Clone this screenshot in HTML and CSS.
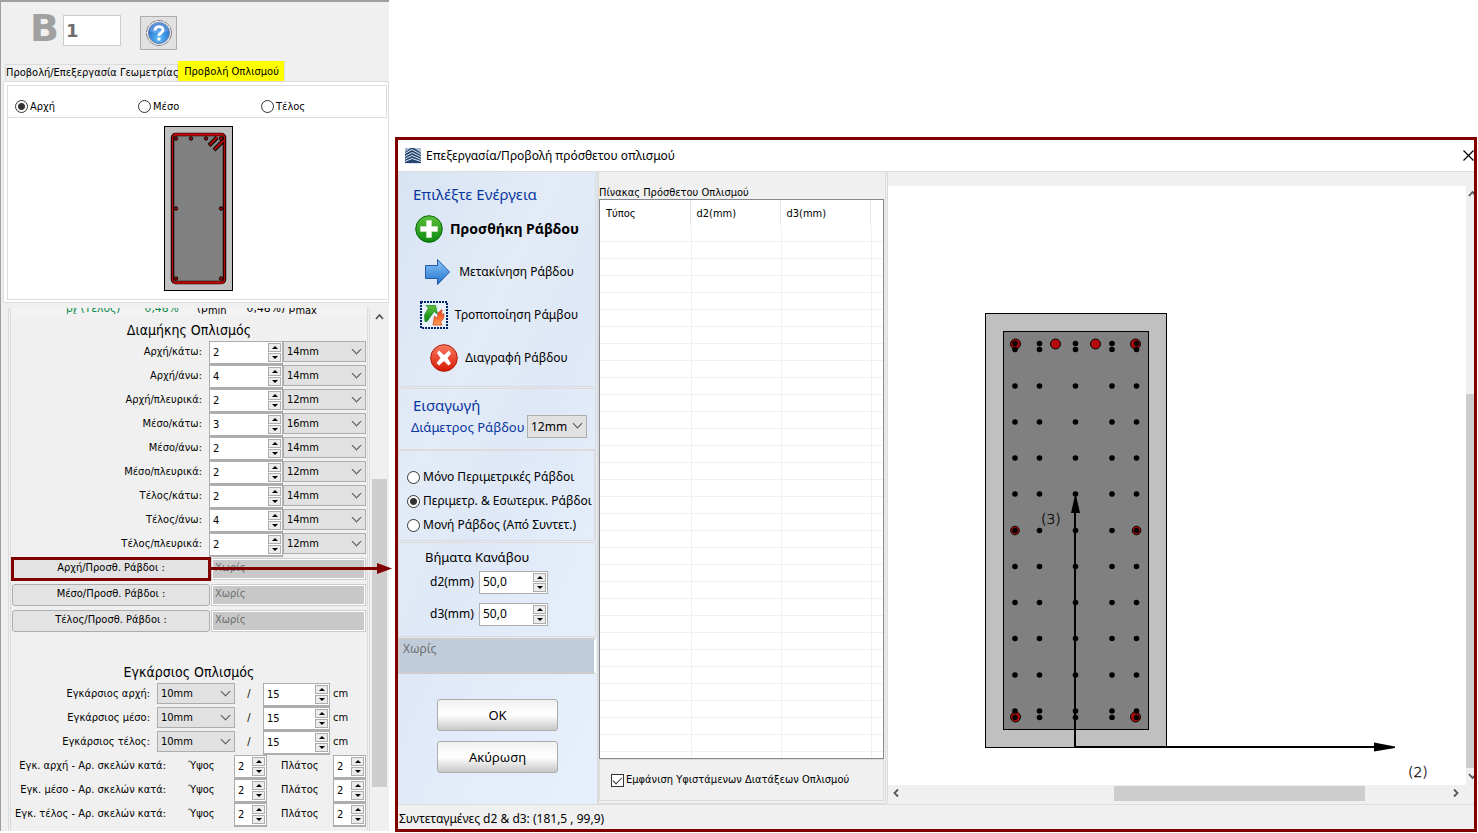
FILE: index.html
```html
<!DOCTYPE html>
<html lang="el">
<head>
<meta charset="utf-8">
<title>Επεξεργασία/Προβολή πρόσθετου οπλισμού</title>
<link rel="stylesheet" href="styles.css">
</head>
<body>
<svg width="0" height="0" class="defs" aria-hidden="true">
  <defs>
    <radialGradient id="blue" cx="50%" cy="75%" r="70%"><stop offset="0" stop-color="#5cc0fa"/><stop offset="1" stop-color="#1b62c8"/></radialGradient>
    <linearGradient id="green" x1="0" y1="0" x2="0" y2="1"><stop offset="0" stop-color="#5cc03c"/><stop offset="1" stop-color="#0c8a10"/></linearGradient>
    <linearGradient id="red" x1="0" y1="0" x2="0" y2="1"><stop offset="0" stop-color="#fa7a60"/><stop offset="1" stop-color="#d81804"/></linearGradient>
    <linearGradient id="arrow" x1="0" y1="0" x2="0" y2="1"><stop offset="0" stop-color="#8cc8fa"/><stop offset="1" stop-color="#2070cc"/></linearGradient>
    <linearGradient id="orange" x1="0" y1="0" x2="0" y2="1"><stop offset="0" stop-color="#f03c10"/><stop offset="1" stop-color="#ff9a50"/></linearGradient>
  </defs>
</svg>
<div class="page">
  <aside class="props">
    <header class="member">
      <label class="member-letter" for="member">B</label>
      <input class="member-no" id="member" value="1">
      <button class="help" aria-label="Βοήθεια">
        <svg width="28" height="28" viewBox="0 0 28 28"><circle cx="14" cy="14" r="12.500" fill="#e8e8ec" stroke="#85858c" stroke-dasharray="7 1"/><circle cx="14" cy="14" r="10.500" fill="url(#blue)" stroke="#6683a8"/><path d="M5 12a9 9 0 0 1 18 0c-5 3-13 3-18 0z" fill="#8ab8f0" opacity=".5"/><path d="M10 11.500c0-5 8-5 8-.5 0 3-4 2.500-4 6" fill="none" stroke="#fff" stroke-width="2.800"/><rect x="12.500" y="18.500" width="3" height="3" fill="#fff"/></svg>
      </button>
    </header>
    <nav class="tabs">
      <button class="tab">Προβολή/Επεξεργασία Γεωμετρίας</button>
      <button class="tab active">Προβολή Οπλισμού</button>
    </nav>
    <section class="tab-page">
      <div class="positions">
        <label><input type="radio" name="pos" checked>Αρχή</label>
        <label><input type="radio" name="pos">Μέσο</label>
        <label><input type="radio" name="pos">Τέλος</label>
      </div>
      <div class="preview">
        <svg width="69" height="165" viewBox="0 0 69 165">
          <rect x=".5" y=".5" width="68" height="164" fill="#c0c0c0" stroke="#000"/>
          <rect x="8.500" y="8.500" width="52" height="148" rx="3" fill="#808080" stroke="#000" stroke-width="3.500"/>
          <rect x="8.500" y="8.500" width="52" height="148" rx="3" fill="none" stroke="#b40a0a" stroke-width="1.600"/>
          <path d="M10 8.500h49M10 156.500h49" stroke="#b40a0a" stroke-width="2.500"/>
          <g stroke="#000" stroke-width="4"><path d="M45 19.500l8-8M50 24l9-9"/></g>
          <g stroke="#b40a0a" stroke-width="2"><path d="M45.500 19l8-8M50.500 23.500l9-9"/></g>
          <g fill="#b40a0a" stroke="#000"><circle cx="12" cy="12.500" r="1.700"/><circle cx="27" cy="12.500" r="1.700"/><circle cx="42" cy="12.500" r="1.700"/><circle cx="57" cy="12.500" r="1.700"/><circle cx="12" cy="82.500" r="1.700"/><circle cx="57" cy="82.500" r="1.700"/><circle cx="12" cy="152.500" r="1.700"/><circle cx="57" cy="152.500" r="1.700"/></g>
        </svg>
      </div>
    </section>
    <div class="scroller">
      <div class="sheet">
        <div class="ratio"><span class="ratio-a">ρ<sub>ℓ</sub> (Τέλος)</span><span class="ratio-a">0,48%</span><span class="ratio-b">(ρ<sub>min</sub></span><span>0,48%) ρ<sub>max</sub></span></div>
        <h2>Διαμήκης Οπλισμός</h2>
        <div class="bars">
          <label for="b1">Αρχή/κάτω:</label><span class="spin"><input id="b1" value="2"><span class="steps"><button aria-label="+"></button><button aria-label="-"></button></span></span><span class="pick"><select aria-label="Διάμετρος"><option>14mm</option></select></span>
          <label for="b2">Αρχή/άνω:</label><span class="spin"><input id="b2" value="4"><span class="steps"><button aria-label="+"></button><button aria-label="-"></button></span></span><span class="pick"><select aria-label="Διάμετρος"><option>14mm</option></select></span>
          <label for="b3">Αρχή/πλευρικά:</label><span class="spin"><input id="b3" value="2"><span class="steps"><button aria-label="+"></button><button aria-label="-"></button></span></span><span class="pick"><select aria-label="Διάμετρος"><option>12mm</option></select></span>
          <label for="b4">Μέσο/κάτω:</label><span class="spin"><input id="b4" value="3"><span class="steps"><button aria-label="+"></button><button aria-label="-"></button></span></span><span class="pick"><select aria-label="Διάμετρος"><option>16mm</option></select></span>
          <label for="b5">Μέσο/άνω:</label><span class="spin"><input id="b5" value="2"><span class="steps"><button aria-label="+"></button><button aria-label="-"></button></span></span><span class="pick"><select aria-label="Διάμετρος"><option>14mm</option></select></span>
          <label for="b6">Μέσο/πλευρικά:</label><span class="spin"><input id="b6" value="2"><span class="steps"><button aria-label="+"></button><button aria-label="-"></button></span></span><span class="pick"><select aria-label="Διάμετρος"><option>12mm</option></select></span>
          <label for="b7">Τέλος/κάτω:</label><span class="spin"><input id="b7" value="2"><span class="steps"><button aria-label="+"></button><button aria-label="-"></button></span></span><span class="pick"><select aria-label="Διάμετρος"><option>14mm</option></select></span>
          <label for="b8">Τέλος/άνω:</label><span class="spin"><input id="b8" value="4"><span class="steps"><button aria-label="+"></button><button aria-label="-"></button></span></span><span class="pick"><select aria-label="Διάμετρος"><option>14mm</option></select></span>
          <label for="b9">Τέλος/πλευρικά:</label><span class="spin"><input id="b9" value="2"><span class="steps"><button aria-label="+"></button><button aria-label="-"></button></span></span><span class="pick"><select aria-label="Διάμετρος"><option>12mm</option></select></span>
        </div>
        <div class="extras">
          <div class="extra marked"><button>Αρχή/Προσθ. Ράβδοι :</button><input value="Χωρίς" aria-label="Αρχή" disabled>
            <svg class="pointer" width="182" height="12" viewBox="0 0 182 12"><path d="M0 5.500h168" stroke="#800000" stroke-width="3"/><path d="M167 0l15 5.500-15 5.500z" fill="#800000"/></svg>
          </div>
          <div class="extra"><button>Μέσο/Προσθ. Ράβδοι :</button><input value="Χωρίς" aria-label="Μέσο" disabled></div>
          <div class="extra"><button>Τέλος/Προσθ. Ράβδοι :</button><input value="Χωρίς" aria-label="Τέλος" disabled></div>
        </div>
        <h2>Εγκάρσιος Οπλισμός</h2>
        <div class="ties">
          <label for="t1">Εγκάρσιος αρχή:</label><span class="pick"><select id="t1"><option>10mm</option></select></span><span class="slash">/</span><span class="spin"><input value="15" aria-label="cm"><span class="steps"><button aria-label="+"></button><button aria-label="-"></button></span></span><span class="unit">cm</span>
          <label for="t2">Εγκάρσιος μέσο:</label><span class="pick"><select id="t2"><option>10mm</option></select></span><span class="slash">/</span><span class="spin"><input value="15" aria-label="cm"><span class="steps"><button aria-label="+"></button><button aria-label="-"></button></span></span><span class="unit">cm</span>
          <label for="t3">Εγκάρσιος τέλος:</label><span class="pick"><select id="t3"><option>10mm</option></select></span><span class="slash">/</span><span class="spin"><input value="15" aria-label="cm"><span class="steps"><button aria-label="+"></button><button aria-label="-"></button></span></span><span class="unit">cm</span>
        </div>
        <div class="legs">
          <span class="lead">Εγκ. αρχή - Αρ. σκελών κατά:</span><label for="h1">Ύψος</label><span class="spin"><input id="h1" value="2"><span class="steps"><button aria-label="+"></button><button aria-label="-"></button></span></span><label for="w1">Πλάτος</label><span class="spin"><input id="w1" value="2"><span class="steps"><button aria-label="+"></button><button aria-label="-"></button></span></span>
          <span class="lead">Εγκ. μέσο - Αρ. σκελών κατά:</span><label for="h2">Ύψος</label><span class="spin"><input id="h2" value="2"><span class="steps"><button aria-label="+"></button><button aria-label="-"></button></span></span><label for="w2">Πλάτος</label><span class="spin"><input id="w2" value="2"><span class="steps"><button aria-label="+"></button><button aria-label="-"></button></span></span>
          <span class="lead">Εγκ. τέλος - Αρ. σκελών κατά:</span><label for="h3">Ύψος</label><span class="spin"><input id="h3" value="2"><span class="steps"><button aria-label="+"></button><button aria-label="-"></button></span></span><label for="w3">Πλάτος</label><span class="spin"><input id="w3" value="2"><span class="steps"><button aria-label="+"></button><button aria-label="-"></button></span></span>
        </div>
      </div>
      <div class="vbar">
        <svg width="15" height="18" viewBox="0 0 15 18"><path d="M4 11l3.500-4 3.500 4" fill="none" stroke="#555" stroke-width="1.800"/></svg>
        <div class="vthumb"></div>
      </div>
    </div>
  </aside>

  <main class="dialog">
    <header class="title">
      <svg width="16" height="16" viewBox="0 0 16 16"><rect width="16" height="16" fill="#24466e"/><path d="M0 0h6L0 4zM9 0h7v5z" fill="#a8bcd0"/><path d="M0 5.500l7-4 9 5M0 8.500l7-4 9 4.500M0 11l7-3.500 9 4M0 13.500l7-3 9 3M0 15.500h16" fill="none" stroke="#dce8f4"/></svg>
      <h1>Επεξεργασία/Προβολή πρόσθετου οπλισμού</h1>
      <button class="close" aria-label="Κλείσιμο"><svg width="11" height="11" viewBox="0 0 11 11"><path d="M.5.500l10 10M10.500.500l-10 10" stroke="#000" stroke-width="1.200"/></svg></button>
    </header>
    <div class="work">
      <div class="side">
        <section class="box actions">
          <h3>Επιλέξτε Ενέργεια</h3>
          <button class="act current"><svg width="28" height="28" viewBox="0 0 28 28"><circle cx="14" cy="14" r="13.300" fill="url(#green)" stroke="#0a6a0a"/><path d="M11.500 5.500h5v6h6v5h-6v6h-5v-6h-6v-5h6z" fill="#fff" stroke="#d8e8d0" stroke-width=".6"/></svg>Προσθήκη Ράβδου</button>
          <button class="act"><svg width="28" height="28" viewBox="0 0 28 28"><path d="M1.500 7.500h12v-6l12 12.500-12 12.500v-6h-12z" fill="url(#arrow)" stroke="#2458a8"/></svg>Μετακίνηση Ράβδου</button>
          <button class="act"><svg width="28" height="28" viewBox="0 0 28 28"><rect x="1" y="1" width="26" height="26" fill="#e8f0fa" stroke="#00246e" stroke-width="2" stroke-dasharray="2 1"/><path d="M5 20.500L4.500 14 8.500 7 6 4.500h9.500l2 8.500-3.500-2.500-7 10z" fill="url(#green)" stroke="#128020" stroke-width=".7"/><path d="M22 8.500l-4 3.500-.5 5.500-3-2.500-1.500 9h9l-1.500-3 3-3.500.5-5-2.500 1.500z" fill="url(#orange)" stroke="#c83c10" stroke-width=".7"/></svg>Τροποποίηση Ράμβου</button>
          <button class="act"><svg width="28" height="28" viewBox="0 0 28 28"><circle cx="14" cy="14" r="13.300" fill="url(#red)" stroke="#b01c0c"/><path d="M9 6.500l5 4.500 5-4.500 2 3-3.500 4.500 3.500 5.500-2.500 2-4.500-4.500-5 4.500-2.500-2.500 4-5-3.500-5z" fill="#fff"/></svg>Διαγραφή Ράβδου</button>
        </section>
        <section class="box insert">
          <h3>Εισαγωγή</h3>
          <div class="dia"><label for="dia">Διάμετρος Ράβδου</label><span class="pick"><select id="dia"><option>12mm</option></select></span></div>
        </section>
        <section class="box modes">
          <label><input type="radio" name="mode">Μόνο Περιμετρικές Ράβδοι</label>
          <label><input type="radio" name="mode" checked>Περιμετρ. &amp; Εσωτερικ. Ράβδοι</label>
          <label><input type="radio" name="mode">Μονή Ράβδος (Από Συντετ.)</label>
        </section>
        <section class="box grid">
          <h4>Βήματα Κανάβου</h4>
          <div class="step"><label for="d2">d2(mm)</label><span class="spin"><input id="d2" value="50,0"><span class="steps"><button aria-label="+"></button><button aria-label="-"></button></span></span></div>
          <div class="step"><label for="d3">d3(mm)</label><span class="spin"><input id="d3" value="50,0"><span class="steps"><button aria-label="+"></button><button aria-label="-"></button></span></span></div>
        </section>
        <textarea class="note" aria-label="Περιγραφή" disabled>Χωρίς</textarea>
        <div class="confirm"><button>ΟΚ</button><button>Ακύρωση</button></div>
      </div>
      <div class="middle">
        <p class="caption">Πίνακας Πρόσθετου Οπλισμού</p>
        <div class="list">
          <table>
            <thead><tr><th>Τύπος</th><th>d2(mm)</th><th>d3(mm)</th><th class="rest"></th></tr></thead>
          </table>
          <div class="rows"></div>
        </div>
        <div class="show"><label><input type="checkbox" checked>Εμφάνιση Υφιστάμενων Διατάξεων Οπλισμού</label></div>
      </div>
      <div class="view">
        <svg class="canvas" width="100%" height="100%">
          <defs><g id="dots"><circle cx="127" r="2.800"/><circle cx="151.500" r="2.800"/><circle cx="187.500" r="2.800"/><circle cx="224" r="2.800"/><circle cx="248.500" r="2.800"/></g></defs>
          <rect x="97.500" y="127.500" width="181" height="434" fill="#c0c0c0" stroke="#000"/>
          <rect x="115.500" y="145.500" width="145" height="398" fill="#808080" stroke="#000"/>
          <g fill="#b40a0a" stroke="#000"><circle cx="127.500" cy="158" r="5"/><circle cx="167.500" cy="158" r="5"/><circle cx="207.500" cy="158" r="5"/><circle cx="247.500" cy="158" r="5"/><circle cx="127" cy="344.500" r="4.300"/><circle cx="248.500" cy="344.500" r="4.300"/><circle cx="127.500" cy="531" r="5"/><circle cx="247.500" cy="531" r="5"/></g>
          <use href="#dots" y="157.500"/><use href="#dots" y="163.500"/><use href="#dots" y="200"/><use href="#dots" y="236"/><use href="#dots" y="272"/><use href="#dots" y="308"/><use href="#dots" y="344.500"/><use href="#dots" y="380.500"/><use href="#dots" y="416.500"/><use href="#dots" y="452.500"/><use href="#dots" y="489"/><use href="#dots" y="525"/><use href="#dots" y="531.500"/>
          <path d="M187 562V320M186 561h308" stroke="#000" stroke-width="2"/>
          <path d="M187.500 307l4.500 20h-9zM507 560.500v1.500l-21 3.500v-9z"/>
          <text x="153" y="338">(3)</text><text x="520" y="591">(2)</text>
        </svg>
        <div class="rail"><div class="rail-thumb"></div><svg width="8" height="16" viewBox="0 0 8 16"><path d="M3 10l3.500-4 3.500 4" fill="none" stroke="#555" stroke-width="1.800"/></svg><svg width="8" height="16" viewBox="0 0 8 16"><path d="M3 5l3.500 4L10 5" fill="none" stroke="#555" stroke-width="1.800"/></svg></div>
        <div class="hbar"><svg width="16" height="16" viewBox="0 0 16 16"><path d="M10 4.500L6.500 8l3.500 3.500" fill="none" stroke="#555" stroke-width="1.800"/></svg><div class="htrack"><div class="hthumb"></div></div><svg width="16" height="16" viewBox="0 0 16 16"><path d="M5 4.500L8.500 8 5 11.500" fill="none" stroke="#555" stroke-width="1.800"/></svg></div>
      </div>
    </div>
    <footer class="status">Συντεταγμένες d2 &amp; d3: (181,5 , 99,9)</footer>
  </main>
</div>
</body>
</html>
```

FILE: styles.css
```css
* { box-sizing: border-box; }
body { margin: 0; background: #fff; color: #000; font: 11px/14px "DejaVu Sans Condensed", "DejaVu Sans", sans-serif; }
button, input, select, textarea { font: inherit; color: inherit; margin: 0; padding: 0; border-radius: 0; }
h1, h2, h3, h4, p { margin: 0; font-weight: normal; }
svg { display: block; flex: none; }
.defs { position: absolute; }
.page { display: flex; gap: 6px; min-height: 100vh; padding: 0 1px 1px 0; }

/* Properties column */
.props { flex: 0 0 389px; display: flex; flex-direction: column; background: #f0f0f0; border-left: 1px solid #a0a0a0; border-top: 2px solid #a0a0a0; padding-left: 2px; margin-bottom: 1px; }
.member { display: flex; align-items: flex-start; padding: 13px 0 0 27px; height: 59px; }
.member-letter { width: 33px; font: bold 38px/26px "DejaVu Sans", sans-serif; color: #a0a0a0; }
.member-no { width: 58px; height: 31px; border: 1px solid #ccc; background: #fff; padding: 0 2px; font: bold 18px/28px "DejaVu Sans", sans-serif; color: #6d6d6d; }
.help { width: 37px; height: 34px; margin: 1px 0 0 19px; padding: 2px 4px; border: 1px solid #adadad; background: #e1e1e1; }
.tabs { display: flex; align-items: flex-end; padding-left: 2px; }
.tab { height: 17px; width: 173px; border: 1px solid #dcdcdc; border-bottom: 0; background: #f0f0f0; text-align: center; white-space: nowrap; }
.tab.active { height: 20px; width: 107px; background: #ff0; border-color: #ff0 #dcdcdc #ff0 #ff0; }
.tab-page { border: 1px solid #dcdcdc; background: #fff; padding: 3px 1px 2px 3px; }
.positions { display: flex; height: 33px; border: 1px solid #dcdcdc; padding: 9px 0 0 7px; }
.positions label { display: flex; align-items: center; gap: 2px; width: 123px; height: 23px; }
.preview { display: flex; justify-content: center; padding: 8px 0 8px 2px; border: solid #dcdcdc; border-width: 0 0 1px 1px; }
input[type="radio"] { appearance: none; width: 13px; height: 13px; border: 1px solid #333; border-radius: 50%; background: #fff; flex: none; }
input[type="radio"]:checked { background: radial-gradient(circle, #333 0 3px, #fff 4px); }

.scroller { flex: 1; display: flex; margin: 5px 2px 0 5px; }
.sheet { flex: 1; border: 3px double #dcdcdc; border-width: 0 3px; }
.vbar { width: 15px; margin-left: 2px; display: flex; flex-direction: column; }
.vthumb { height: 308px; margin-top: 153px; background: #cdcdcd; }
.ratio { display: flex; height: 6px; margin-bottom: 7px; padding-left: 55px; gap: 24px; overflow: hidden; font-size: 12px; line-height: 1px; background: #f3f3f3; }
.ratio sub { font-size: 11px; line-height: 1px; vertical-align: -2px; }
.ratio-a { color: #0a8a4a; }
.ratio-b { margin: 0 -4px 0 -6px; }
h2 { font-size: 14px; line-height: 19px; text-align: center; }
.spin { display: flex; height: 24px; border: 2px solid #adadad; border-width: 1px 1px 2px; background: #fff; padding: 1px; }
.spin input { flex: 1; width: 0; min-width: 0; border: 0; background: transparent; padding-left: 2px; }
.steps { display: flex; flex-direction: column; justify-content: space-between; width: 13px; flex: none; }
.steps button { height: 9px; border: 1px solid #acacac; background: #ececec; display: grid; place-items: center; }
.steps button::before { content: ""; border: 3px solid transparent; border-bottom-color: #000; border-top: 0; }
.steps button:last-child::before { border: 3px solid transparent; border-top-color: #000; border-bottom: 0; }
.pick { position: relative; display: block; height: 21px; }
.pick select { appearance: none; width: 100%; height: 100%; border: 1px solid #adadad; background: #e1e1e1; padding-left: 3px; }
.pick::after { content: ""; position: absolute; right: 6px; top: 5px; width: 6px; height: 6px; border: solid #555; border-width: 0 1px 1px 0; transform: rotate(45deg); pointer-events: none; }
.bars { display: grid; grid-template-columns: 1fr 74px 83px; grid-auto-rows: 24px; margin: 1px 1px 0 0; }
.bars label, .ties label, .lead { line-height: 21px; text-align: right; white-space: nowrap; }
.bars label { padding-right: 7px; }
.extras { display: flex; flex-direction: column; gap: 4px; margin: 1px 1px 31px 1px; }
.extra { position: relative; display: flex; gap: 1px; height: 22px; }
.extra button { width: 198px; border: 1px solid #adadad; border-radius: 3px; background: #e3e3e3; padding-bottom: 3px; }
.extra input { flex: 1; min-width: 0; border: 1px solid #ccc; outline: 1px solid #fff; outline-offset: -2px; background: #c8c8c8; color: #6d6d6d; padding: 0 0 3px 3px; }
.marked button { outline: 3px solid #800000; outline-offset: -2px; border-radius: 0; }
.pointer { position: absolute; left: 198px; top: 5px; z-index: 2; }
.ties { display: grid; grid-template-columns: 146px 78px 28px 67px 1fr; grid-auto-rows: 24px; margin-top: 1px; }
.ties label { padding-right: 1px; margin-right: 6px; }
.slash { text-align: center; line-height: 21px; }
.unit { padding-left: 3px; line-height: 21px; }
.legs { display: grid; grid-template-columns: 155px 68px 33px 66px 33px; grid-auto-rows: 24px; }
.legs label { line-height: 21px; padding-left: 22px; }
.legs label:nth-child(5n + 4) { padding-left: 14px; }

/* Dialog */
.dialog { flex: 1; min-width: 0; margin-top: 137px; border: 3px solid #800000; display: flex; flex-direction: column; background: #f0f0f0; font: 12px/16px "Noto Sans", "Open Sans", sans-serif; }
.title { display: flex; align-items: center; gap: 5px; height: 32px; padding-left: 7px; background: #fff; border-bottom: 1px solid #dcdcdc; }
.title h1 { flex: 1; font-size: 12px; line-height: 16px; }
.close { border: 0; background: none; }
.work { flex: 1; display: flex; }
.side { flex: 0 0 199px; display: flex; flex-direction: column; background: linear-gradient(115deg, #d8e4f3 0, #e3ebf7 32%, #dee8f6 50%, #e4eefb 75%, #e6f0fc 100%); }
.box { border: 1px solid #dcdcdc; margin: 0 1px 1px 0; }
.side h3 { color: #0a36a0; font-size: 15px; line-height: 20px; padding-left: 14px; }
.actions { height: 215px; padding-top: 12px; display: flex; flex-direction: column; border-top: 0; }
.act { display: flex; align-items: center; justify-content: center; gap: 7px; height: 28px; margin-top: 15px; padding-left: 4px; border: 0; background: none; white-space: nowrap; }
.act.current { font-size: 14px; font-weight: bold; margin-top: 11px; padding-left: 0; }
.insert { height: 62px; padding-top: 6px; margin-bottom: 0; }
.dia { display: flex; align-items: center; padding-left: 12px; gap: 6px; color: #0a36a0; font-size: 13px; }
.dia label { width: 110px; white-space: nowrap; }
.dia .pick { width: 60px; height: 23px; color: #000; font-size: 12px; }
.modes { height: 91px; padding: 14px 0 0 8px; border-right-width: 2px; }
.modes label { display: flex; align-items: center; gap: 3px; height: 24px; white-space: nowrap; }
.grid { height: 95px; padding-top: 5px; }
.grid h4 { font-size: 13px; line-height: 18px; padding-left: 26px; }
.step { display: flex; align-items: center; padding-left: 31px; height: 24px; margin: 4px 0 8px; }
.step label { width: 49px; }
.step .spin { width: 69px; height: 23px; border-width: 1px; }
.note { height: 36px; width: 198px; resize: none; border: 2px solid #ccc; border-right-color: #fff; background: #c0ccd9; color: #6d6d6d; padding: 1px 3px; }
.confirm { display: flex; flex-direction: column; gap: 10px; width: 121px; margin: 25px auto 30px 39px; }
.confirm button { height: 32px; border: 1px solid #adadad; border-radius: 3px; background: linear-gradient(#f0f0f0, #fff 50%, #c8c8c8); font-size: 13px; }
.middle { flex: 0 0 289px; display: flex; flex-direction: column; border: solid #dcdcdc; border-width: 0 1px 1px 2px; padding: 14px 1px 2px 0; font: 11px/14px "DejaVu Sans Condensed", sans-serif; }
.caption { line-height: 13px; }
.list { flex: 1; display: flex; flex-direction: column; border: 1px solid #828790; background: #fff; }
.list table { border-collapse: collapse; table-layout: fixed; width: 100%; }
.list th { width: 90px; height: 25px; padding: 2px 0 0 6px; text-align: left; font-weight: normal; border-right: 1px solid #e5e5e5; }
.list th.rest { width: auto; border: 0; }
.rows { flex: 1; background: repeating-linear-gradient(#0000 0 16px, #f0f0f0 16px 17px), linear-gradient(90deg, #0000 91px, #f0f0f0 91px 92px, #0000 92px 181px, #f0f0f0 181px 182px, #0000 182px 271px, #f0f0f0 271px 272px, #0000 272px); }
.show { height: 42px; border: 1px solid #dcdcdc; padding: 13px 0 0 11px; }
.show label { display: flex; align-items: center; gap: 2px; white-space: nowrap; }
.show input { appearance: none; width: 13px; height: 13px; border: 1px solid #333; background: #fff; flex: none; display: grid; place-items: center; }
.show input::before { content: ""; width: 8px; height: 4px; border: solid #333; border-width: 0 0 1px 1px; transform: rotate(-45deg); margin-bottom: 2px; }
.view { flex: 1; min-width: 0; display: grid; grid-template: 1fr 17px / 1fr 8px; padding: 14px 0 2px; border-left: 1px solid #dcdcdc; margin-left: 1px; }
.canvas { background: #fff; min-width: 0; }
.canvas text { font: 14px "DejaVu Sans Light", "Open Sans", sans-serif; font-weight: 200; stroke: #000; stroke-width: .3px; }
.rail { position: relative; display: flex; flex-direction: column; justify-content: space-between; }
.rail-thumb { position: absolute; inset: 208px 0 17px 0; background: #cdcdcd; }
.hbar { grid-column: 1 / 3; display: flex; align-items: center; height: 16px; padding-right: 9px; }
.htrack { flex: 1; display: flex; }
.hthumb { width: 46%; height: 15px; margin-left: 38.5%; background: #cdcdcd; }
.status { height: 25px; border-top: 1px solid #dcdcdc; line-height: 28px; padding-left: 1px; font-size: 12px; }
```
